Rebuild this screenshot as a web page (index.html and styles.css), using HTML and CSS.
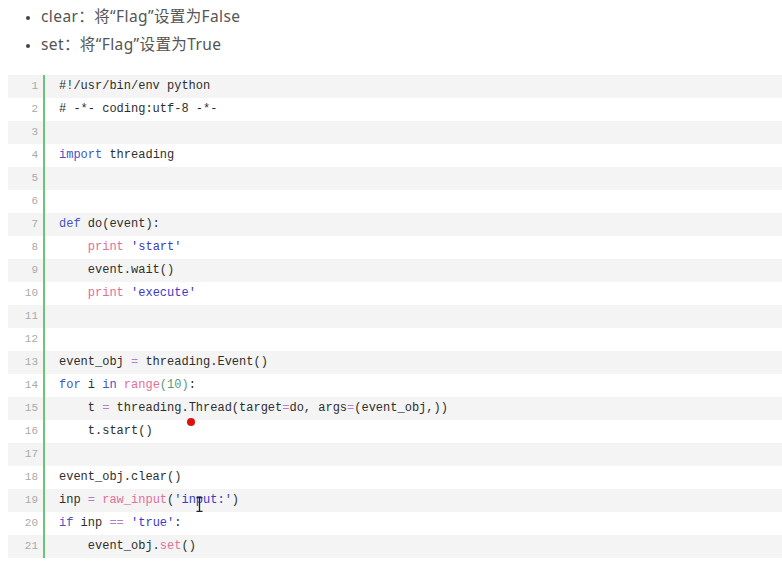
FILE: index.html
```html
<!DOCTYPE html>
<html lang="zh-CN">
<head>
    <meta charset="UTF-8">
    <meta name="viewport" content="width=device-width, initial-scale=1.0">
    <title>threading.Event</title>
    <link rel="stylesheet" href="styles.css">
</head>
<body>
    <ul class="notes">
        <li>clear：将“Flag”设置为False</li>
        <li>set：将“Flag”设置为True</li>
    </ul>

    <div class="code">
        <div class="row"><span class="num">1</span><span class="line">#!/usr/bin/env python</span></div>
        <div class="row"><span class="num">2</span><span class="line"># -*- coding:utf-8 -*-</span></div>
        <div class="row"><span class="num">3</span><span class="line"></span></div>
        <div class="row"><span class="num">4</span><span class="line"><span class="kw">import</span> threading</span></div>
        <div class="row"><span class="num">5</span><span class="line"></span></div>
        <div class="row"><span class="num">6</span><span class="line"></span></div>
        <div class="row"><span class="num">7</span><span class="line"><span class="kw">def</span> do(event):</span></div>
        <div class="row"><span class="num">8</span><span class="line">    <span class="fn">print</span> <span class="str">'start'</span></span></div>
        <div class="row"><span class="num">9</span><span class="line">    event.wait()</span></div>
        <div class="row"><span class="num">10</span><span class="line">    <span class="fn">print</span> <span class="str">'execute'</span></span></div>
        <div class="row"><span class="num">11</span><span class="line"></span></div>
        <div class="row"><span class="num">12</span><span class="line"></span></div>
        <div class="row"><span class="num">13</span><span class="line">event_obj <span class="op">=</span> threading.Event()</span></div>
        <div class="row"><span class="num">14</span><span class="line"><span class="kw">for</span> i <span class="kw">in</span> <span class="fn">range</span><span class="nb">(10)</span>:</span></div>
        <div class="row"><span class="num">15</span><span class="line">    t <span class="op">=</span> threading.Thread(target<span class="op">=</span>do, args<span class="op">=</span>(event_obj,))</span></div>
        <div class="row"><span class="num">16</span><span class="line">    t.start()</span></div>
        <div class="row"><span class="num">17</span><span class="line"></span></div>
        <div class="row"><span class="num">18</span><span class="line">event_obj.clear()</span></div>
        <div class="row"><span class="num">19</span><span class="line">inp <span class="op">=</span> <span class="fn">raw_input</span>(<span class="str">'input:'</span>)</span></div>
        <div class="row"><span class="num">20</span><span class="line"><span class="kw">if</span> inp <span class="op">==</span> <span class="str">'true'</span>:</span></div>
        <div class="row"><span class="num">21</span><span class="line">    event_obj.<span class="fn">set</span>()</span></div>

        <span class="dot"></span>
        <svg class="cursor" width="7" height="15" viewBox="0 0 7 15">
            <path d="M0.5 0.5h6M3.5 0.5v14M0.5 14.5h6" stroke="#222" stroke-width="1.3" fill="none"/>
        </svg>
    </div>
</body>
</html>
```

FILE: styles.css
```css
body {
    margin: 0;
    background: #ffffff;
    font-family: "Noto Sans", "Noto Sans CJK SC", sans-serif;
    color: #555555;
}

.notes {
    margin: 0;
    padding: 2px 0 0 41px;
    font-size: 15.5px;
    line-height: 28px;
    letter-spacing: 0.4px;
}

.notes li::marker {
    color: #444444;
    font-size: 12px;
}

.code {
    position: relative;
    margin: 17px 0 0 8px;
    font-family: "Liberation Mono", "DejaVu Sans Mono", monospace;
    font-size: 12px;
}

.row {
    display: flex;
    height: 23px;
    line-height: 23px;
}

.row:nth-child(odd) {
    background: #f4f4f4;
}

.num {
    width: 30px;
    padding-right: 5px;
    text-align: right;
    font-size: 11px;
    color: #aaaaaa;
}

.line {
    flex: 1;
    border-left: 2px solid #6cc47a;
    padding-left: 14px;
    white-space: pre;
    color: #2e2e2e;
}

.kw {
    color: #4455c0;
}

.fn {
    color: #e0709a;
}

.str {
    color: #3a3ac4;
}

.op {
    color: #b080c8;
}

.nb {
    color: #5a9a76;
}

.dot {
    position: absolute;
    left: 179px;
    top: 343px;
    width: 8px;
    height: 8px;
    border-radius: 50%;
    background: #e01010;
}

.cursor {
    position: absolute;
    left: 188px;
    top: 422px;
}
```
